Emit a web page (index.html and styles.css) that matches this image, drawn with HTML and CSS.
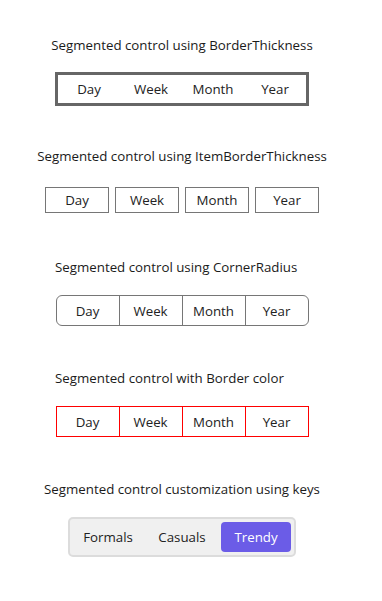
FILE: index.html
```html
<!DOCTYPE html>
<html>
<head>
  <meta charset="UTF-8">
  <title>Segmented control</title>
  <link rel="stylesheet" href="styles.css">
</head>
<body>
<div class="page">
  <div class="section">
    <p class="caption">Segmented control using BorderThickness</p>
    <div class="row">
      <div class="seg seg-thick">
        <span>Day</span><span>Week</span><span>Month</span><span>Year</span>
      </div>
    </div>
  </div>
  <div class="section">
    <p class="caption">Segmented control using ItemBorderThickness</p>
    <div class="row">
      <div class="seg seg-items">
        <span>Day</span><span>Week</span><span>Month</span><span>Year</span>
      </div>
    </div>
  </div>
  <div class="section">
    <p class="caption caption-left">Segmented control using CornerRadius</p>
    <div class="row">
      <div class="seg seg-round">
        <span>Day</span><span>Week</span><span>Month</span><span>Year</span>
      </div>
    </div>
  </div>
  <div class="section">
    <p class="caption caption-left">Segmented control with Border color</p>
    <div class="row">
      <div class="seg seg-red">
        <span>Day</span><span>Week</span><span>Month</span><span>Year</span>
      </div>
    </div>
  </div>
  <div class="section section-last">
    <p class="caption">Segmented control customization using keys</p>
    <div class="row">
      <div class="seg seg-keys">
        <span>Formals</span><span>Casuals</span><span class="selected">Trendy</span>
      </div>
    </div>
  </div>
</div>
</body>
</html>
```

FILE: styles.css
```css
body {
  margin: 0;
  background: #fff;
  font-family: "Open Sans", "Noto Sans", sans-serif;
  font-size: 13.3px;
  color: #1b1b1b;
}
.page {
  width: 364px;
  padding-top: 35px;
}
.section {
  height: 111px;
  display: flex;
  flex-direction: column;
}
.caption {
  margin: 0;
  height: 20px;
  line-height: 20px;
  text-align: center;
}
.caption-left {
  width: 254px;
  margin: 0 auto;
  text-align: left;
}
.row {
  height: 67px;
  display: flex;
  align-items: center;
  justify-content: center;
}
.section-last .row {
  margin-top: 4px;
}
.seg {
  display: flex;
}
.seg span {
  display: flex;
  align-items: center;
  justify-content: center;
  color: #222;
}

/* 1: thick outer border */
.seg-thick {
  border: 3px solid #666;
}
.seg-thick span {
  width: 62px;
  height: 28px;
}

/* 2: border on every item */
.seg-items {
  gap: 6px;
}
.seg-items span {
  width: 62px;
  height: 24px;
  border: 1px solid #767676;
}

/* 3 + 4: rounded / coloured */
.seg-round,
.seg-red {
  border: 1px solid #767676;
  border-radius: 6px;
}
.seg-red {
  border-color: #f00;
  border-radius: 0;
}
.seg-round span,
.seg-red span {
  width: 62px;
  height: 29px;
}
.seg-round span + span {
  border-left: 1px solid #767676;
}
.seg-red span + span {
  border-left: 1px solid #f00;
}

/* 5: keys */
.seg-keys {
  border: 2px solid #dcdcdc;
  border-radius: 5px;
  background: #f0f0f0;
  padding: 3px;
  gap: 4px;
}
.seg-keys span {
  width: 70px;
  height: 30px;
  border-radius: 4px;
}
.seg-keys span.selected {
  background: #6b5ce7;
  color: #fff;
}
```
